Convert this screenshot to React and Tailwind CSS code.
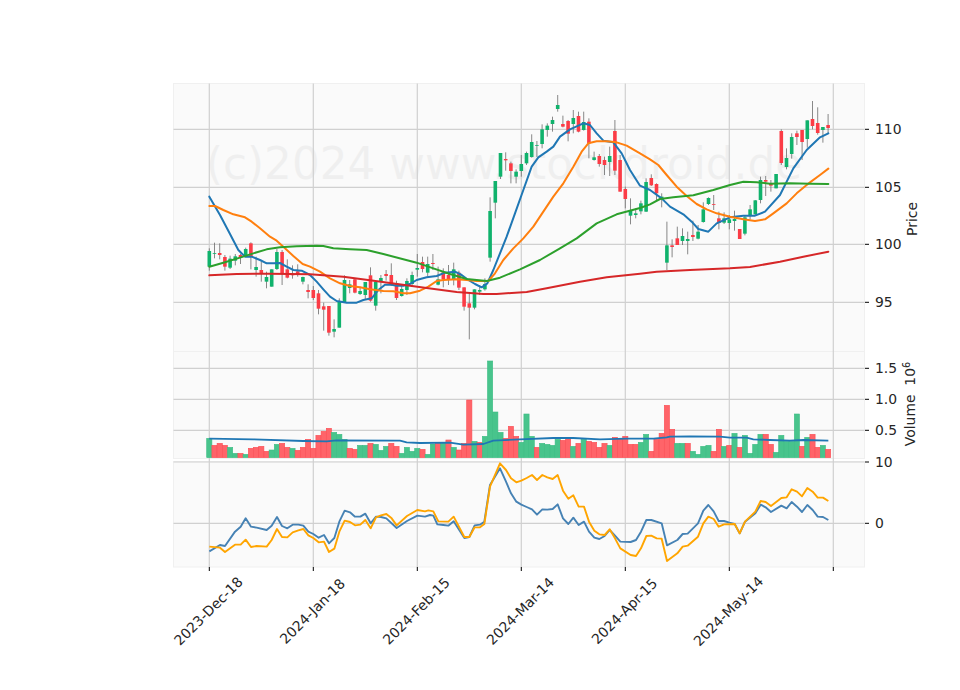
const FONT = '"DejaVu Sans", sans-serif';
const barX = (i) => 209.3 + 5.2 * i;

// [bodyTop, bodyBottom, wickTop, wickBottom, colour], y read off a 3x crop (base y=80)
const CANDLES = [
  [513,560,505,572,'g'],[519,521,488,535,'g'],[519,525,490,538,'r'],[531,560,525,572,'r'],[536,563,527,567,'g'],
  [529,542,522,556,'g'],[525,533,522,552,'r'],[507,528,503,530,'g'],[490,530,487,568,'r'],[561,570,530,590,'g'],
  [570,580,545,605,'r'],[591,605,575,625,'g'],[568,620,568,620,'g'],[516,567,507,570,'g'],[516,580,510,615,'r'],
  [568,593,538,595,'r'],[582,586,556,596,'r'],[574,583,553,590,'r'],[591,605,590,613,'g'],[630,636,613,655,'r'],
  [630,654,618,660,'r'],[640,686,630,703,'r'],[679,689,668,752,'r'],[678,758,678,767,'r'],[747,755,718,772,'g'],
  [663,743,655,743,'g'],[600,667,586,668,'g'],[613,624,600,640,'g'],[598,638,596,640,'r'],[633,642,620,645,'g'],
  [606,645,606,658,'g'],[586,662,562,665,'r'],[606,677,606,692,'g'],[594,606,585,640,'g'],[582,588,570,602,'r'],
  [585,610,550,618,'r'],[610,654,602,660,'r'],[627,648,615,650,'g'],[603,630,595,645,'g'],[585,612,575,620,'g'],
  [564,569,522,590,'g'],[546,567,530,577,'r'],[552,578,530,590,'g'],[549,552,522,570,'r'],[598,614,560,616,'g'],
  [577,597,565,622,'r'],[585,598,555,615,'r'],[568,597,548,616,'g'],[578,623,572,630,'r'],[622,680,622,692,'r'],
  [670,683,640,778,'r'],[628,683,628,688,'g'],[630,635,615,645,'g'],[612,628,595,632,'g'],[393,533,352,545,'g'],
  [303,368,303,415,'g'],[219,290,219,297,'g'],[237,241,217,272,'r'],[250,273,245,310,'r'],[275,290,268,310,'g'],
  [252,273,225,290,'g'],[219,250,215,255,'g'],[186,231,163,233,'g'],[195,197,183,231,'g'],[148,192,133,205,'g'],
  [137,150,130,170,'g'],[120,132,110,155,'g'],[75,87,45,95,'g'],[132,140,107,142,'r'],[123,161,120,184,'r'],
  [114,132,90,160,'g'],[108,155,95,157,'r'],[126,150,95,152,'g'],[125,190,115,235,'r'],[232,240,215,242,'g'],
  [228,252,222,260,'r'],[240,255,230,285,'r'],[228,246,200,288,'g'],[153,272,120,285,'r'],[240,335,225,335,'r'],
  [327,357,320,385,'r'],[390,407,355,433,'g'],[400,405,385,415,'g'],[370,394,362,403,'g'],[306,395,295,396,'g'],
  [294,316,283,318,'r'],[312,340,310,362,'r'],[350,358,340,382,'g'],[496,548,425,570,'g'],[496,501,478,532,'r'],
  [475,495,440,495,'r'],[468,483,445,495,'g'],[477,483,455,523,'g'],[465,471,422,483,'r'],[455,476,435,478,'g'],
  [388,426,367,428,'g'],[354,372,352,375,'g'],[372,374,345,390,'r'],[415,429,395,448,'r'],[415,428,397,432,'g'],
  [418,429,405,448,'g'],[417,423,392,452,'g'],[447,477,447,477,'r'],[412,461,405,466,'g'],[388,408,375,418,'g'],
  [361,403,360,405,'g'],[300,360,290,370,'g'],[300,305,288,348,'r'],[312,317,300,335,'r'],[282,325,282,325,'g'],
  [153,249,148,255,'r'],[234,261,205,268,'g'],[171,222,160,236,'g'],[160,171,152,195,'r'],[150,186,150,240,'r'],
  [121,177,121,203,'g'],[117,138,63,148,'r'],[129,159,82,164,'r'],[141,150,141,188,'g'],[135,144,102,160,'r'],
];

// bar top on the same kind of crop (base y=350, bottom 323)
const VOLUME = [
  [265,'g'],[286,'r'],[280,'r'],[286,'r'],[292,'g'],[310,'g'],[310,'r'],[313,'g'],[295,'r'],[292,'r'],
  [289,'r'],[304,'r'],[300,'g'],[283,'g'],[280,'r'],[292,'r'],[295,'g'],[301,'r'],[292,'r'],[268,'r'],
  [295,'r'],[256,'r'],[244,'r'],[235,'r'],[247,'g'],[253,'g'],[268,'g'],[295,'r'],[298,'r'],[286,'g'],
  [286,'g'],[280,'r'],[283,'g'],[301,'g'],[289,'g'],[280,'r'],[289,'r'],[310,'g'],[292,'g'],[304,'g'],
  [295,'g'],[298,'r'],[313,'g'],[282,'g'],[280,'r'],[280,'g'],[270,'r'],[292,'g'],[300,'r'],[280,'r'],
  [150,'r'],[274,'g'],[277,'r'],[259,'g'],[33,'g'],[186,'g'],[247,'g'],[265,'r'],[229,'r'],[259,'r'],
  [277,'g'],[192,'g'],[259,'g'],[292,'r'],[280,'g'],[283,'g'],[286,'g'],[268,'g'],[271,'r'],[266,'r'],
  [289,'g'],[280,'r'],[268,'g'],[274,'r'],[277,'r'],[292,'r'],[280,'r'],[286,'g'],[262,'r'],[265,'r'],
  [259,'r'],[283,'r'],[283,'r'],[277,'g'],[253,'g'],[304,'r'],[268,'r'],[250,'r'],[166,'r'],[238,'r'],
  [280,'g'],[280,'g'],[280,'r'],[304,'g'],[313,'g'],[289,'g'],[286,'g'],[304,'r'],[238,'r'],[289,'g'],
  [286,'r'],[250,'g'],[292,'r'],[256,'g'],[310,'g'],[283,'g'],[253,'g'],[253,'r'],[283,'r'],[307,'g'],
  [256,'g'],[274,'g'],[274,'g'],[192,'g'],[289,'r'],[262,'g'],[253,'r'],[292,'r'],[286,'g'],[298,'r'],
];

// price moving averages, as points on three 3x crops
const crop = (ox, oy) => (pts) => pts.map(([x, y]) => `${ox + x / 3},${oy + y / 3}`).join(' ');
const a = crop(170, 80);
const b = crop(400, 80);
const c = crop(630, 80);
const d = crop(170, 350);
const e = crop(420, 350);
const f = crop(670, 350);

const MA_LINES = [
  { color: '#1f77b4', pts: [
    a([[118,350],[150,405],[180,462],[205,510],[225,530],[245,530],[270,540],[290,550],[310,550],[330,549],[350,560],[370,570],[395,572],[420,585],[440,605],[460,628],[480,650],[500,663],[530,668],[560,668],[580,660],[605,655],[625,630],[645,614],[665,614],[680,617],[700,617]]),
    b([[30,612],[50,600],[80,592],[110,588],[135,578],[165,575],[185,585],[205,600],[225,612],[245,622],[262,610],[280,570],[300,520],[320,470],[345,400],[370,330],[395,260],[415,232],[440,215],[460,200],[480,170],[510,148],[550,130],[570,135],[590,160],[610,182],[640,187],[665,220],[690,270]]),
    c([[30,317],[60,330],[95,355],[120,380],[160,403],[185,425],[205,447],[235,455],[260,430],[300,412],[340,407],[375,407],[405,395],[450,345],[490,265],[530,210],[570,172],[595,160]]),
  ] },
  { color: '#ff7f0e', pts: [
    a([[118,378],[135,378],[160,390],[190,403],[225,412],[245,425],[270,445],[300,470],[320,482],[340,500],[370,528],[398,552],[420,560],[450,575],[480,595],[510,610],[540,618],[570,622],[600,628],[640,633],[670,634],[700,640]]),
    b([[30,640],[60,632],[85,620],[110,603],[130,600],[170,598],[200,600],[230,603],[265,603],[285,580],[310,540],[340,505],[370,475],[400,440],[430,395],[460,350],[490,310],[520,260],[545,215],[565,190],[590,184],[620,184],[650,187],[680,197]]),
    c([[30,220],[60,238],[85,255],[110,285],[140,320],[170,348],[200,372],[230,388],[260,400],[300,410],[340,418],[375,423],[405,418],[430,400],[470,370],[500,340],[540,307],[570,285],[595,266]]),
  ] },
  { color: '#2ca02c', pts: [
    a([[118,560],[160,548],[210,533],[250,520],[290,508],[330,502],[380,499],[440,497],[460,498],[490,505],[540,508],[590,510],[640,522]]),
    b([[30,543],[50,548],[100,565],[150,582],[200,597],[260,603],[300,593],[360,568],[420,540],[480,505],[530,475],[590,430],[650,403]]),
    c([[30,384],[60,373],[90,357],[130,352],[190,346],[250,330],[300,315],[340,305],[380,307],[420,311],[480,310],[540,311],[595,312]]),
  ] },
  { color: '#d62728', pts: [
    a([[118,586],[200,582],[300,581],[420,583],[520,590],[600,601]]),
    b([[30,617],[80,624],[170,636],[250,642],[290,642],[380,636],[440,625],[540,605],[620,592]]),
    c([[30,581],[80,575],[180,570],[300,565],[360,561],[450,545],[520,530],[595,515]]),
  ] },
];

const VOL_MA =
  [
    d([[118,266],[250,268],[400,273],[470,274],[500,271],[690,272],[710,277]]),
    e([[0,279],[90,278],[130,284],[190,282],[220,272],[300,268],[400,264],[460,264],[540,268],[620,266],[700,266],[740,262]]),
    f([[0,260],[60,259],[150,260],[180,263],[230,263],[250,268],[300,270],[360,272],[400,270],[475,272]]),
  ].join(' ');

const MACD = [
  { color: '#4682b4', pts: [
    d([[118,604],[150,585],[165,588],[195,545],[212,530],[227,505],[243,530],[260,533],[290,540],[305,527],[321,501],[336,528],[352,535],[368,524],[385,524],[400,527],[415,545],[430,552],[446,563],[462,555],[477,580],[493,564],[508,515],[524,482],[540,487],[555,500],[571,500],[586,491],[602,520],[618,500],[633,501],[649,505],[680,534],[711,513],[742,497]]),
    e([[15,500],[30,495],[40,497],[52,523],[70,525],[85,527],[101,514],[133,564],[148,561],[164,526],[180,524],[193,515],[210,405],[240,355],[258,395],[273,430],[289,455],[304,464],[320,471],[336,478],[351,494],[367,478],[382,479],[398,477],[413,463],[429,505],[445,522],[460,503],[476,525],[492,515],[507,545],[523,563],[538,567],[554,558],[569,540],[585,557],[601,575],[632,576],[648,570],[663,545],[679,510],[694,510],[725,520],[741,586]]),
    f([[22,570],[38,552],[53,551],[84,520],[100,482],[115,465],[131,484],[146,513],[162,513],[178,518],[194,522],[209,550],[225,515],[256,490],[272,464],[287,472],[303,486],[334,467],[350,475],[365,456],[381,470],[396,486],[412,465],[428,480],[443,500],[459,501],[475,510]]),
  ] },
  { color: '#ffa500', pts: [
    d([[118,590],[150,593],[165,606],[195,584],[212,584],[227,569],[243,591],[260,588],[290,590],[305,570],[321,537],[336,561],[352,562],[368,547],[385,541],[400,537],[415,556],[430,564],[446,577],[462,575],[477,606],[493,596],[508,545],[524,512],[540,516],[555,526],[571,524],[586,510],[602,535],[618,502],[633,496],[649,492],[665,505],[680,526],[711,498],[742,480]]),
    e([[15,484],[25,481],[40,484],[55,514],[85,515],[101,500],[133,561],[148,561],[164,532],[180,532],[193,522],[210,410],[240,340],[258,360],[273,385],[289,397],[304,392],[320,384],[336,375],[351,390],[367,375],[382,382],[398,387],[413,375],[429,422],[445,446],[460,436],[476,470],[492,470],[507,515],[523,542],[538,553],[554,555],[569,538],[585,565],[601,595],[632,615],[648,618],[663,595],[679,558],[694,557],[710,565],[725,566],[741,633]]),
    f([[22,610],[38,590],[53,587],[84,560],[100,520],[115,500],[131,507],[146,530],[162,523],[194,522],[209,550],[225,515],[256,485],[272,453],[287,456],[303,468],[334,444],[350,442],[365,418],[381,425],[396,439],[412,414],[428,425],[443,443],[459,443],[475,453]]),
  ] },
];

const PANELS = [
  [173.5, 83.5, 691, 268],
  [173.5, 351.5, 691, 107],
  [173.5, 461.5, 691, 105.5],
];
const H_GRID = [129.3, 187.3, 244.3, 302.3, 368.3, 399.3, 430.3, 462, 523.3];
const V_GRID = [0, 1, 2, 3, 4, 5, 6].map((k) => 209.3 + 104 * k);
const Y_TICKS = [
  ['110', 129.3], ['105', 187.3], ['100', 244.3], ['95', 302.3],
  ['1.5', 368.3], ['1.0', 399.3], ['0.5', 430.3], ['10', 462], ['0', 523.3],
];
const X_LABELS = ['2023-Dec-18', '2024-Jan-18', '2024-Feb-15', '2024-Mar-14', '2024-Apr-15', '2024-May-14'];

const UP = { g: '#10b26c', r: '#fb3c46' };
const VOL_FILL = { g: '#48c48c', r: '#ff6469' };
const VOL_EDGE = { g: '#3dbd84', r: '#fb4d54' };

function Chart() {
  return (
    <svg width="960" height="690" viewBox="0 0 960 690" className="block" style={{ fontFamily: FONT }}>
      {PANELS.map(([x, y, w, h]) => (
        <rect key={y} x={x} y={y} width={w} height={h} fill="#fafafa" stroke="#f0f0f0" />
      ))}

      <text x="206" y="179" fontSize="43.7" fill="#808080" opacity="0.08">
        (c)2024 www.stockdroid.de
      </text>

      {H_GRID.map((y) => (
        <line key={y} x1="173.5" x2="864.5" y1={y} y2={y} stroke="#d0d0d0" strokeWidth="1.2" />
      ))}
      {V_GRID.map((x) => (
        <line key={x} x1={x} x2={x} y1="83.5" y2="567" stroke="#d0d0d0" strokeWidth="1.2" />
      ))}

      {CANDLES.map(([top, bot, wt, wb, col], i) => (
        <g key={i}>
          <line x1={barX(i)} x2={barX(i)} y1={80 + wt / 3} y2={80 + wb / 3} stroke="#6b6b6b" strokeWidth="0.8" />
          <rect x={barX(i) - 1.8} width="3.6" y={80 + top / 3} height={Math.max((bot - top) / 3, 0.8)} fill={UP[col]} />
        </g>
      ))}
      {MA_LINES.map((l) => (
        <polyline key={l.color} points={l.pts.join(' ')} fill="none" stroke={l.color} strokeWidth="2" strokeLinejoin="round" strokeLinecap="round" />
      ))}

      {VOLUME.map(([top, col], i) => (
        <rect
          key={i}
          x={barX(i) - 2.6}
          width="5.2"
          y={350 + top / 3}
          height={(323 - top) / 3}
          fill={VOL_FILL[col]}
          stroke={VOL_EDGE[col]}
          strokeWidth="0.6"
        />
      ))}
      <polyline points={VOL_MA} fill="none" stroke="#1f77b4" strokeWidth="1.8" strokeLinejoin="round" />

      {MACD.map((l) => (
        <polyline key={l.color} points={l.pts.join(' ')} fill="none" stroke={l.color} strokeWidth="1.9" strokeLinejoin="round" />
      ))}

      {Y_TICKS.map(([label, y]) => (
        <g key={label}>
          <line x1="865" x2="869" y1={y} y2={y} stroke="#000" strokeWidth="1" />
          <text x="875" y={y} dy="0.36em" fontSize="13.9" fill="#262626">{label}</text>
        </g>
      ))}
      {V_GRID.map((x) => (
        <line key={x} x1={x} x2={x} y1="567" y2="571" stroke="#000" strokeWidth="1" />
      ))}
      {X_LABELS.map((label, i) => (
        <text
          key={label}
          x={V_GRID[i] - 1}
          y="611"
          dy="0.36em"
          textAnchor="middle"
          fontSize="13.9"
          fill="#262626"
          transform={`rotate(-45 ${V_GRID[i] - 1} 611)`}
        >
          {label}
        </text>
      ))}

      <text x="912" y="219" dy="0.36em" textAnchor="middle" fontSize="13.9" fill="#262626" transform="rotate(-90 912 219)">
        Price
      </text>
      <text x="910" y="404" dy="0.36em" textAnchor="middle" fontSize="13.9" fill="#262626" transform="rotate(-90 910 404)" xmlSpace="preserve">
        Volume  10<tspan dy="-5" fontSize="9.7">6</tspan>
      </text>
    </svg>
  );
}

export default function App() {
  return (
    <div className="h-[690px] w-[960px] overflow-hidden bg-white">
      <Chart />
    </div>
  );
}
